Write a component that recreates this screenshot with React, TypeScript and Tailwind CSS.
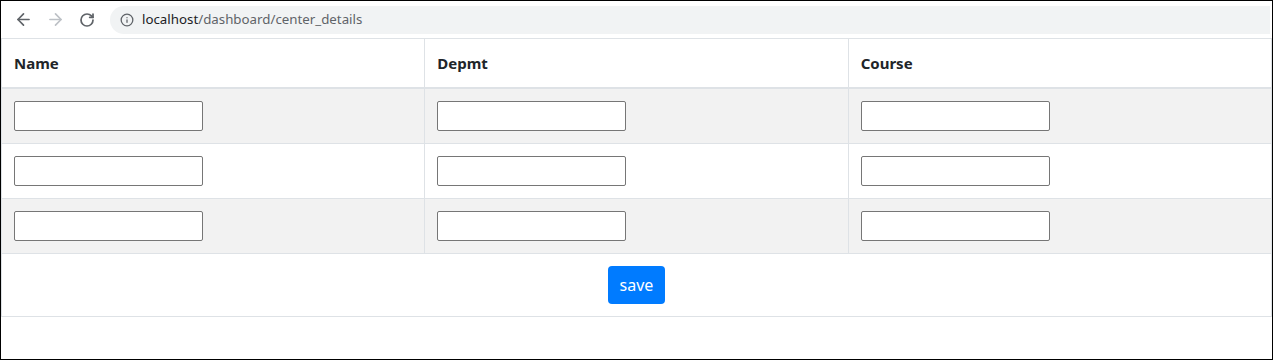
import { ArrowLeft, ArrowRight, RotateCw, Info } from "lucide-react";

const rows = [0, 1, 2];

function BrowserBar() {
    return (
        <div className="flex h-[37px] items-center bg-white">
            <div className="flex w-[109px] items-center">
                <ArrowLeft className="ml-[13px] text-[#5f6368]" size={19} strokeWidth={2.1} />
                <ArrowRight className="ml-[13px] text-[#bdc1c6]" size={19} strokeWidth={2.1} />
                <RotateCw className="ml-[14px] text-[#5f6368]" size={16} strokeWidth={2.6} />
            </div>
            <div className="mr-[2px] flex h-[28px] flex-1 items-center rounded-l-full bg-[#f1f3f4]">
                <Info className="ml-[10px] text-[#5f6368]" size={14} strokeWidth={2.2} />
                <span className="ml-[8px] text-[13.3px] text-[#202124] font-['Segoe_UI','Noto_Sans',sans-serif]">
                    localhost<span className="text-[#5f6368]">/dashboard/center_details</span>
                </span>
            </div>
        </div>
    )
}

export default function App() {
    return (
        <div className="h-[360px] w-[1273px] overflow-hidden border border-black bg-white font-['Segoe_UI','Noto_Sans',sans-serif] text-[#212529]">
            <BrowserBar />
            <table className="w-[1271px] table-fixed border-collapse border border-[#dee2e6] text-[15px]">
                <thead>
                    <tr>
                        <th className="border border-b-2 border-[#dee2e6] px-[12px] py-[12px] text-left font-bold leading-6">Name</th>
                        <th className="border border-b-2 border-[#dee2e6] px-[12px] py-[12px] text-left font-bold leading-6">Depmt</th>
                        <th className="border border-b-2 border-[#dee2e6] px-[12px] py-[12px] text-left font-bold leading-6">Course</th>
                    </tr>
                </thead>
                <tbody>
                    {rows.map((r) => (
                        <tr key={r} className={r % 2 === 0 ? "bg-[#f2f2f2]" : "bg-white"}>
                            {[0, 1, 2].map((c) => (
                                <td key={c} className="border border-[#dee2e6] p-[12px]">
                                    <input type="text" className="block h-[30px] w-[189px] rounded-[2px] border border-[#767676] bg-white" />
                                </td>
                            ))}
                        </tr>
                    ))}
                    <tr>
                        <td colSpan={3} className="border border-[#dee2e6] p-[12px] text-center">
                            <button className="h-[38px] rounded-[4px] bg-[#007bff] px-[12px] text-[16px] leading-6 text-white">
                                save
                            </button>
                        </td>
                    </tr>
                </tbody>
            </table>
        </div>
    )
}
